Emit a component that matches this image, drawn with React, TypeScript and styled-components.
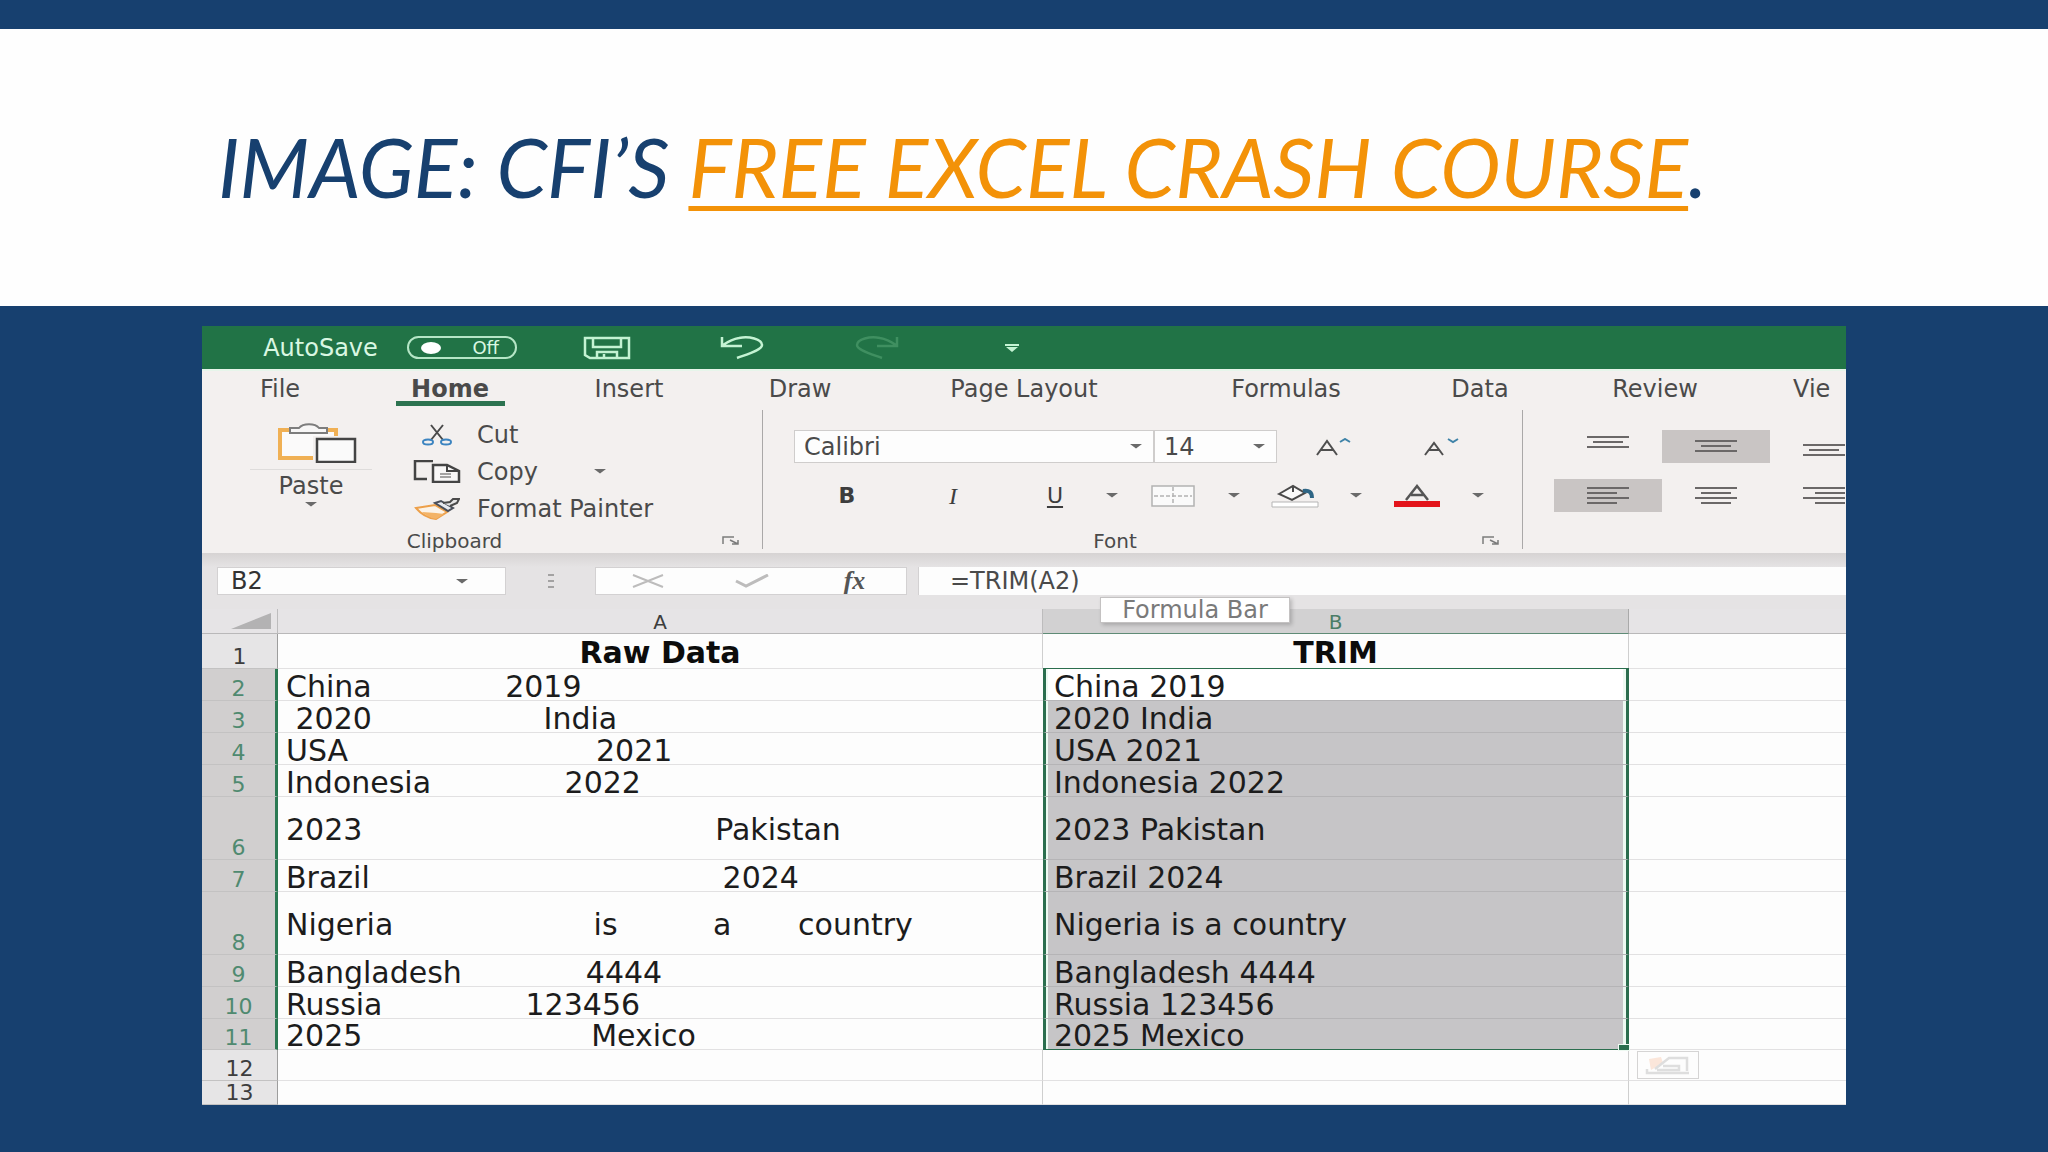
import React from "react";
import styled, { createGlobalStyle, css } from "styled-components";

const navy = "#17406f";
const orange = "#f39208";
const green = "#217346";
const ink = "#4a4a4a";

const Global = createGlobalStyle`
  *, *::before, *::after { box-sizing: border-box; }
  body { margin: 0; background: ${navy}; }
  button, input, select { font: inherit; color: inherit; margin: 0; border: 0; border-radius: 0; background: none; }
  button { padding: 0; }
  svg { display: block; flex: none; }
`;

/* ---------- slide ---------- */

const Slide = styled.main`
  min-height: 100vh;
  padding-top: 29px;
  background: ${navy};
  font-family: "DejaVu Sans", Verdana, sans-serif;
`;

const TitleBand = styled.header`
  display: flex;
  align-items: center;
  min-height: 277px;
  padding: 0 218px 2px;
  background: #fefefe;
`;

const Title = styled.h1`
  margin: 0;
  color: ${navy};
  font: italic 400 81px/100px Lato, "Open Sans", sans-serif;
  white-space: nowrap;
`;

const TitleLink = styled.a`
  color: ${orange};
  text-decoration: underline;
  text-decoration-thickness: 5px;
  text-underline-offset: 8px;
  text-decoration-skip-ink: none;
`;

const Workbook = styled.section`
  position: relative;
  margin: 20px 202px 47px;
  overflow: hidden;
  background: #f3f0ef;
  color: ${ink};
  font-size: 24px;
  line-height: 24px;
`;

/* ---------- title bar ---------- */

const QuickBar = styled.div`
  display: flex;
  align-items: center;
  height: 43px;
  padding-left: 46px;
  background: ${green};
  color: #d9f7e2;
`;

const AutoSave = styled.label`
  display: flex;
  align-items: center;
  gap: 14px;
  margin-right: 22px;
`;

const AutoSaveText = styled.span`
  width: 145px;
  text-align: center;
`;

const Toggle = styled.span`
  display: flex;
  align-items: center;
  justify-content: space-between;
  width: 110px;
  height: 23px;
  padding: 0 16px 0 12px;
  border: 2px solid #b5e6c6;
  border-radius: 12px;
  font-size: 18px;
  line-height: 18px;
`;

const ToggleBox = styled.input`
  appearance: none;
  width: 20px;
  height: 12px;
  border-radius: 50% !important;
  background: #fff !important;
`;

const QuickButton = styled.button<{ $faded?: boolean }>`
  display: flex;
  justify-content: center;
  width: 135px;
  color: ${(p) => (p.$faded ? "#3f8f60" : "#c4f3d3")};
`;

/* ---------- tabs ---------- */

const Tabs = styled.nav`
  display: grid;
  grid-template-columns: 156px 184px 174px 168px 280px 244px 144px 206px 1fr;
  height: 41px;
  border-top: 2px solid #e6f5ea;
  overflow: hidden;
`;

const Tab = styled.button<{ $active?: boolean; $cut?: boolean }>`
  display: flex;
  justify-content: ${(p) => (p.$cut ? "flex-start" : "center")};
  align-items: flex-start;
  padding: 6px 0 0 ${(p) => (p.$cut ? "35px" : "0")};
  white-space: nowrap;
  span {
    ${(p) =>
      p.$active &&
      css`
        min-width: 109px;
        border-bottom: 5px solid #2c7350;
        font-weight: 700;
      `}
  }
`;

/* ---------- ribbon ---------- */

const Ribbon = styled.div`
  display: grid;
  grid-template-columns: 561px 760px 1fr;
  height: 143px;
`;

const Group = styled.div`
  position: relative;
  display: grid;
  grid-template-rows: 1fr 24px;
  min-width: 0;
  &:not(:last-child)::after {
    content: "";
    position: absolute;
    right: 0;
    top: 0;
    bottom: 4px;
    width: 1px;
    background: #aaa8a8;
  }
`;

const GroupFoot = styled.div`
  display: grid;
  grid-template-columns: 1fr 48px;
  align-items: center;
  justify-items: center;
  padding-right: 8px;
  font-size: 20px;
`;

const ClipboardBody = styled.div`
  display: flex;
  gap: 37px;
  padding: 6px 0 0 48px;
`;

const PasteButton = styled.button`
  display: flex;
  flex-direction: column;
  align-items: center;
  width: 122px;
  padding-top: 7px;
  svg:first-child { margin-left: 12px; }
`;

const PasteLabel = styled.span`
  align-self: stretch;
  margin: 6px 0 4px;
  padding-top: 4px;
  border-top: 1px solid #dedcdb;
`;

const Commands = styled.div`
  display: grid;
  grid-auto-rows: 37px;
`;

const Command = styled.button`
  display: flex;
  align-items: center;
  gap: 12px;
  white-space: nowrap;
`;

const IconSlot = styled.span`
  display: flex;
  justify-content: center;
  width: 56px;
`;

const CommandText = styled.span`
  min-width: 104px;
  text-align: left;
`;

const FontBody = styled.div`
  display: grid;
  grid-template-rows: 33px 33px;
  gap: 16px;
  padding: 20px 0 0 31px;
`;

const ToolRow = styled.div`
  display: flex;
  align-items: stretch;
`;

const SelectBox = styled.label<{ $w: number }>`
  position: relative;
  width: ${(p) => p.$w}px;
  border: 1px solid #cfcdcc;
  background: #fdfdfd;
  svg { position: absolute; right: 10px; top: 13px; pointer-events: none; }
`;

const Select = styled.select`
  appearance: none;
  width: 100%;
  height: 100%;
  padding: 0 9px;
`;

const Tool = styled.button<{ $w: number }>`
  display: flex;
  align-items: center;
  justify-content: center;
  width: ${(p) => p.$w}px;
`;

const Letter = styled.span<{ $kind: "b" | "i" | "u" }>`
  color: #3d3d3d;
  font-size: 22px;
  font-weight: ${(p) => (p.$kind === "b" ? 700 : 400)};
  ${(p) => p.$kind === "i" && css`font-family: "Liberation Serif", serif; font-style: italic; font-size: 24px;`}
  ${(p) => p.$kind === "u" && css`text-decoration: underline; text-decoration-thickness: 2px; text-underline-offset: 3px;`}
`;

const AlignBody = styled.div`
  display: grid;
  grid-template: 33px 33px / repeat(3, 108px);
  gap: 16px 0;
  padding: 20px 0 0 31px;
`;

const AlignButton = styled.button<{ $on?: boolean; $shift?: string }>`
  display: flex;
  align-items: ${(p) => p.$shift || "center"};
  justify-content: center;
  padding: 5px 0;
  background: ${(p) => (p.$on ? "#c9c5c4" : "none")};
`;

/* ---------- formula bar ---------- */

const FormulaRow = styled.div`
  display: flex;
  height: 56px;
  padding: 14px 0 14px 15px;
  background: linear-gradient(#d6d3d3, #e5e3e4 14px);
`;

const NameBox = styled.label`
  position: relative;
  width: 289px;
  background: #fdfdfd;
  border: 1px solid #d3d1d2;
  svg { position: absolute; right: 36px; top: 11px; }
`;

const Field = styled.input`
  width: 100%;
  height: 100%;
  padding: 0 13px;
  color: #333;
`;

const Dots = styled.span`
  display: flex;
  align-items: center;
  justify-content: center;
  width: 89px;
`;

const EntryTools = styled.div`
  display: flex;
  width: 312px;
  margin-right: 11px;
  background: #fdfdfd;
  border: 1px solid #d3d1d2;
`;

const FormulaField = styled.label`
  flex: 1;
  background: #fdfdfd;
  border-left: 1px solid #d3d1d2;
  input { padding-left: 31px; color: ${ink}; }
`;

const Tip = styled.div`
  position: absolute;
  left: 898px;
  top: 271px;
  width: 190px;
  height: 26px;
  border: 1px solid #c4c2c2;
  background: #fff;
  box-shadow: 2px 2px 4px #0003;
  color: #7a7a7a;
  text-align: center;
`;

/* ---------- sheet ---------- */

const Sheet = styled.table`
  width: 100%;
  table-layout: fixed;
  border-collapse: separate;
  border-spacing: 0;
  background: #fdfdfd;
  color: #1c1c1c;
  font-size: 30px;
  line-height: 26px;
  th, td { padding: 0; }
`;

const ColHead = styled.th<{ $on?: boolean }>`
  height: 25px;
  border-right: 1px solid ${(p) => (p.$on ? "#a9a9a9" : "#bdbcbd")};
  border-bottom: 1px solid ${(p) => (p.$on ? "#5f8b76" : "#b9b8b9")};
  background: ${(p) => (p.$on ? "#d2d1d2" : "#e6e4e6")};
  color: ${(p) => (p.$on ? "#4b7d67" : "#3d3d3d")};
  font-size: 20px;
  font-weight: 400;
  line-height: 22px;
  vertical-align: bottom;
  &:last-child { border-right: 0; }
  svg { margin: 0 6px 4px auto; }
`;

const RowHead = styled.th<{ $on: boolean }>`
  border-bottom: 1px solid #c3c2c2;
  border-right: ${(p) => (p.$on ? "3px solid #2b7a53" : "1px solid #9d9d9d")};
  background: ${(p) => (p.$on ? "#d1cfcf" : "#e6e5e6")};
  color: ${(p) => (p.$on ? "#4f8a70" : "#3d3d3d")};
  font-size: 22px;
  font-weight: 400;
  line-height: 22px;
  vertical-align: bottom;
`;

const Row = styled.tr<{ $h: number }>`
  height: ${(p) => p.$h}px;
`;

const Cell = styled.td<{ $sel?: "first" | "mid" | "last"; $head?: boolean; $plain?: boolean; $text?: boolean }>`
  border-bottom: 1px solid #e2e1e2;
  white-space: pre;
  && {
    padding-left: ${(p) => (p.$head ? 0 : 8)}px;
    padding-top: ${(p) => (p.$text || p.$head ? 4 : 0)}px;
  }
  ${(p) => p.$head && css`font-weight: 700; text-align: center; color: #0c0c0c;`}
  ${(p) => p.$plain && css`border-right: 1px solid #cfcfcf;`}
  ${(p) =>
    p.$sel &&
    css`
      border-left: 3px solid #2b6e4e;
      border-right: 3px solid #2b6e4e;
      border-bottom-color: ${p.$sel === "last" ? "#2b6e4e" : "#b5b4b6"};
      background: ${p.$sel === "first" ? "#fff" : "#c6c5c7"};
      box-shadow: inset 2px 0 #eefaf2, inset -3px 0 #eefaf2${p.$sel === "first" ? ", 0 -1px #2b6e4e" : ""};
      ${p.$sel === "last" && css`position: relative;`}
    `}
`;

const FillHandle = styled.span`
  position: absolute;
  right: -4px;
  bottom: -2px;
  width: 12px;
  height: 7px;
  border: 1px solid #eefaf2;
  background: #2b6e4e;
`;

const PasteOptions = styled.button`
  display: flex;
  align-items: center;
  justify-content: center;
  width: 62px;
  height: 28px;
  border: 1px solid #d5d4d4 !important;
`;

/* ---------- drawings ---------- */

const Caret = () => (
  <svg width="14" height="5" viewBox="0 0 14 5" aria-hidden="true">
    <path d="M1 0h12L7 4.500z" fill="#6a6a6a" />
  </svg>
);

const Launcher = () => (
  <svg width="18" height="10" viewBox="0 0 18 10" fill="none" stroke="#7c7c7c" strokeWidth="1.500">
    <path d="M1 8V1h11M8 4l8 4M16 4v4h-6" />
  </svg>
);

const SaveIcon = () => (
  <svg width="48" height="24" viewBox="0 0 48 24" fill="none" stroke="currentColor" strokeWidth="2.500">
    <path d="M2 2h44v20H7l-5-3zM10 2v9h28V2M14 22v-6h20v6M21 18v4" />
  </svg>
);

const UndoIcon = ({ flip }: { flip?: boolean }) => (
  <svg width="44" height="24" viewBox="0 0 44 24" fill="none" stroke="currentColor" strokeWidth="2.500">
    <g transform={flip ? "matrix(-1 0 0 1 44 0)" : undefined}>
      <path d="M2 1v9h20M3 9C9 5 13 3 19 2C29 0 42 3 42 9C42 14 28 18 17 22" />
    </g>
  </svg>
);

const MoreIcon = () => (
  <svg width="14" height="8" viewBox="0 0 14 8">
    <path d="M0 0h14v2H0zM1 3h12L7 8z" fill="currentColor" />
  </svg>
);

const PasteIcon = () => (
  <svg width="80" height="40" viewBox="0 0 80 40">
    <path d="M3 7h56v28H3z" fill="#fbfafa" stroke="#f0b054" strokeWidth="4" />
    <path d="M36 13h44v27H36z" fill="#f3f0ef" />
    <path d="M13 10v-5h9c4-5 16-5 20 0h8v5z" fill="#f7f6f6" stroke="#7d7d7d" strokeWidth="2" />
    <path d="M40 16h38v23H40z" fill="#fafafa" stroke="#444" strokeWidth="2.500" />
  </svg>
);

const CutIcon = () => (
  <svg width="30" height="22" viewBox="0 0 30 22" fill="none" strokeWidth="2">
    <path d="M9 1l12 15M21 1L9 16" stroke="#4a4a4a" />
    <ellipse cx="6" cy="18" rx="5" ry="2.500" stroke="#3c84c0" />
    <ellipse cx="24" cy="18" rx="5" ry="2.500" stroke="#3c84c0" />
  </svg>
);

const CopyIcon = () => (
  <svg width="48" height="23" viewBox="0 0 48 23" fill="none" stroke="#444" strokeWidth="2.500">
    <path d="M14 19H2V1h18" />
    <path d="M20 5h14l12 6v11H20z" fill="#f8f7f7" />
    <path d="M34 5v6h11" strokeWidth="2" />
    <path d="M27 14h11M27 17h11" stroke="#888" strokeWidth="1.500" />
  </svg>
);

const PainterIcon = () => (
  <svg width="46" height="22" viewBox="0 0 46 22">
    <path d="M2 10l19-3 12 7-11 7c-8-1-15-5-20-11z" fill="#fbf3e8" stroke="#eda04a" strokeWidth="2" />
    <path d="M8 14l14 1 8 1-8 5c-6-1-11-4-14-7z" fill="#f3b366" />
    <path d="M21 5l6-2 12 7-5 3z" fill="#e8eaf0" stroke="#4a4f5a" strokeWidth="2" />
    <path d="M29 5l7-1 3-3h6l-2 4-7 3" fill="#e6e6e6" stroke="#4a4a4a" strokeWidth="2" />
  </svg>
);

const SizeIcon = ({ down }: { down?: boolean }) => (
  <svg width="36" height="18" viewBox="0 0 36 18" fill="none" strokeWidth="2">
    <path d={down ? "M1 17L10 5l9 12M5 12h10" : "M1 17L11 3l10 14M5 12h12"} stroke="#4f4f4f" />
    <path d={down ? "M24 1l5 3 5-3" : "M24 4l5-3 5 3"} stroke="#3f83a8" />
  </svg>
);

const BorderIcon = () => (
  <svg width="44" height="22" viewBox="0 0 44 22" fill="#fafafa" stroke="#b3b2b2" strokeWidth="1.500">
    <path d="M1 1h42v20H1z" />
    <path d="M22 2v18M3 11h38" strokeDasharray="4 2" />
  </svg>
);

const FillIcon = () => (
  <svg width="48" height="24" viewBox="0 0 48 24" fill="none" strokeWidth="2">
    <path d="M8 10L22 2l12 7-13 7zM22 2v6" stroke="#4a4a4a" fill="#fafafa" />
    <path d="M32 7c6-1 9 1 9 7" stroke="#2f6685" strokeWidth="4" />
    <path d="M1 18h46v5H1z" stroke="#b5b5b5" strokeWidth="1" fill="#fff" />
  </svg>
);

const FontColorIcon = () => (
  <svg width="46" height="24" viewBox="0 0 46 24" fill="none">
    <path d="M12 16L23 2l11 14M17 11h13" stroke="#555" strokeWidth="2.500" />
    <path d="M0 17h46v6H0z" fill="#e3141b" />
  </svg>
);

const AlignIcon = ({ rows }: { rows: [number, number][] }) => (
  <svg width="42" height={rows.length * 5} viewBox={`0 0 42 ${rows.length * 5}`}>
    {rows.map(([from, to], i) => (
      <path key={i} d={`M${from} ${i * 5 + 2}H${to}`} stroke="#6b6868" strokeWidth="2" />
    ))}
  </svg>
);

const CrossIcon = () => (
  <svg width="32" height="14" viewBox="0 0 32 14" stroke="#bdbcbc" strokeWidth="2">
    <path d="M1 1l30 12M31 1L1 13" />
  </svg>
);

const CheckIcon = () => (
  <svg width="34" height="14" viewBox="0 0 34 14" fill="none" stroke="#bdbcbc" strokeWidth="3">
    <path d="M1 7l10 5L33 1" />
  </svg>
);

const FxLetters = styled.span`
  color: #555;
  font: italic 700 26px/24px "Liberation Serif", serif;
`;

const CornerIcon = () => (
  <svg width="40" height="16" viewBox="0 0 40 16">
    <path d="M40 0v16H0z" fill="#b3b2b3" />
  </svg>
);

const OptionsIcon = () => (
  <svg width="46" height="20" viewBox="0 0 46 20" fill="none" stroke="#dedede" strokeWidth="2.500">
    <path d="M4 4l12-2 2 6-12 7z" fill="#fbe6da" stroke="none" />
    <path d="M2 14v4h42M10 14L24 3h18v13M18 11h16v4H12" />
  </svg>
);

/* ---------- data ---------- */

const tabs = ["File", "Home", "Insert", "Draw", "Page Layout", "Formulas", "Data", "Review", "Vie"];

const gap = (n: number) => " ".repeat(n);

const records: { h: number; raw: string; trim: string }[] = [
  { h: 32, raw: `China${gap(14)}2019`, trim: "China 2019" },
  { h: 32, raw: `${gap(1)}2020${gap(18)}India`, trim: "2020 India" },
  { h: 32, raw: `USA${gap(26)}2021`, trim: "USA 2021" },
  { h: 32, raw: `Indonesia${gap(14)}2022`, trim: "Indonesia 2022" },
  { h: 63, raw: `2023${gap(37)}Pakistan`, trim: "2023 Pakistan" },
  { h: 32, raw: `Brazil${gap(37)}2024`, trim: "Brazil 2024" },
  { h: 63, raw: `Nigeria${gap(21)}is${gap(10)}a${gap(7)}country`, trim: "Nigeria is a country" },
  { h: 32, raw: `Bangladesh${gap(13)}4444`, trim: "Bangladesh 4444" },
  { h: 32, raw: `Russia${gap(15)}123456`, trim: "Russia 123456" },
  { h: 31, raw: `2025${gap(24)}Mexico`, trim: "2025 Mexico" },
];

const full: [number, number] = [0, 42];
const mid: [number, number] = [6, 36];

export default function App() {
  const last = records.length - 1;
  return (
    <Slide>
      <Global />
      <TitleBand>
        <Title>
          IMAGE: CFI’S <TitleLink href="#course">FREE EXCEL CRASH COURSE</TitleLink>.
        </Title>
      </TitleBand>

      <Workbook>
        <QuickBar>
          <AutoSave>
            <AutoSaveText>AutoSave</AutoSaveText>
            <Toggle>
              <ToggleBox type="checkbox" />
              Off
            </Toggle>
          </AutoSave>
          <QuickButton aria-label="Save"><SaveIcon /></QuickButton>
          <QuickButton aria-label="Undo"><UndoIcon /></QuickButton>
          <QuickButton aria-label="Redo" $faded><UndoIcon flip /></QuickButton>
          <QuickButton aria-label="Customize toolbar"><MoreIcon /></QuickButton>
        </QuickBar>

        <Tabs>
          {tabs.map((t) => (
            <Tab key={t} $active={t === "Home"} $cut={t === "Vie"}>
              <span>{t}</span>
            </Tab>
          ))}
        </Tabs>

        <Ribbon>
          <Group>
            <ClipboardBody>
              <PasteButton>
                <PasteIcon />
                <PasteLabel>Paste</PasteLabel>
                <Caret />
              </PasteButton>
              <Commands>
                <Command>
                  <IconSlot><CutIcon /></IconSlot>
                  <CommandText>Cut</CommandText>
                </Command>
                <Command>
                  <IconSlot><CopyIcon /></IconSlot>
                  <CommandText>Copy</CommandText>
                  <Caret />
                </Command>
                <Command>
                  <IconSlot><PainterIcon /></IconSlot>
                  <CommandText>Format Painter</CommandText>
                </Command>
              </Commands>
            </ClipboardBody>
            <GroupFoot>
              <span>Clipboard</span>
              <button aria-label="Clipboard settings"><Launcher /></button>
            </GroupFoot>
          </Group>

          <Group>
            <FontBody>
              <ToolRow>
                <SelectBox $w={360}>
                  <Select aria-label="Font name" defaultValue="Calibri">
                    <option>Calibri</option>
                  </Select>
                  <Caret />
                </SelectBox>
                <SelectBox $w={123}>
                  <Select aria-label="Font size" defaultValue="14">
                    <option>14</option>
                  </Select>
                  <Caret />
                </SelectBox>
                <Tool $w={114} aria-label="Increase font size"><SizeIcon /></Tool>
                <Tool $w={102} aria-label="Decrease font size"><SizeIcon down /></Tool>
              </ToolRow>
              <ToolRow>
                <Tool $w={106}><Letter $kind="b">B</Letter></Tool>
                <Tool $w={106}><Letter $kind="i">I</Letter></Tool>
                <Tool $w={98}><Letter $kind="u">U</Letter></Tool>
                <Tool $w={16} aria-label="Underline styles"><Caret /></Tool>
                <Tool $w={106} aria-label="Borders"><BorderIcon /></Tool>
                <Tool $w={16} aria-label="Border styles"><Caret /></Tool>
                <Tool $w={106} aria-label="Fill color"><FillIcon /></Tool>
                <Tool $w={16} aria-label="Fill colors"><Caret /></Tool>
                <Tool $w={106} aria-label="Font color"><FontColorIcon /></Tool>
                <Tool $w={16} aria-label="Font colors"><Caret /></Tool>
              </ToolRow>
            </FontBody>
            <GroupFoot>
              <span>Font</span>
              <button aria-label="Font settings"><Launcher /></button>
            </GroupFoot>
          </Group>

          <Group>
            <AlignBody>
              <AlignButton aria-label="Top align" $shift="flex-start"><AlignIcon rows={[full, mid, full]} /></AlignButton>
              <AlignButton aria-label="Middle align" $on><AlignIcon rows={[full, mid, full]} /></AlignButton>
              <AlignButton aria-label="Bottom align" $shift="flex-end"><AlignIcon rows={[full, mid, full]} /></AlignButton>
              <AlignButton aria-label="Align left" $on><AlignIcon rows={[full, [0, 30], full, [0, 30]]} /></AlignButton>
              <AlignButton aria-label="Center"><AlignIcon rows={[full, mid, full, mid]} /></AlignButton>
              <AlignButton aria-label="Align right"><AlignIcon rows={[full, [12, 42], full, [12, 42]]} /></AlignButton>
            </AlignBody>
          </Group>
        </Ribbon>

        <FormulaRow>
          <NameBox>
            <Field aria-label="Name box" defaultValue="B2" />
            <Caret />
          </NameBox>
          <Dots>
            <svg width="8" height="16" viewBox="0 0 8 16" fill="#a3a2a2">
              <path d="M1 1h6v2H1zM1 7h6v2H1zM1 13h6v2H1z" />
            </svg>
          </Dots>
          <EntryTools>
            <Tool $w={104} aria-label="Cancel"><CrossIcon /></Tool>
            <Tool $w={103} aria-label="Enter"><CheckIcon /></Tool>
            <Tool $w={103}><FxLetters>fx</FxLetters></Tool>
          </EntryTools>
          <FormulaField>
            <Field aria-label="Formula bar" defaultValue="=TRIM(A2)" />
          </FormulaField>
        </FormulaRow>

        <Sheet>
          <colgroup>
            <col style={{ width: 76 }} />
            <col style={{ width: 765 }} />
            <col style={{ width: 586 }} />
            <col />
          </colgroup>
          <thead>
            <tr>
              <ColHead aria-label="Select all"><CornerIcon /></ColHead>
              <ColHead>A</ColHead>
              <ColHead $on>B</ColHead>
              <ColHead />
            </tr>
          </thead>
          <tbody>
            <Row $h={35}>
              <RowHead $on={false}>1</RowHead>
              <Cell $head $plain>Raw Data</Cell>
              <Cell $head $plain>TRIM</Cell>
              <Cell />
            </Row>
            {records.map((r, i) => (
              <Row key={i} $h={r.h}>
                <RowHead $on>{i + 2}</RowHead>
                <Cell $text>{r.raw}</Cell>
                <Cell $text $sel={i === 0 ? "first" : i === last ? "last" : "mid"}>
                  {r.trim}
                  {i === last && <FillHandle />}
                </Cell>
                <Cell />
              </Row>
            ))}
            <Row $h={31}>
              <RowHead $on={false}>12</RowHead>
              <Cell $plain />
              <Cell $plain />
              <Cell>
                <PasteOptions aria-label="Paste options"><OptionsIcon /></PasteOptions>
              </Cell>
            </Row>
            <Row $h={24}>
              <RowHead $on={false}>13</RowHead>
              <Cell $plain />
              <Cell $plain />
              <Cell />
            </Row>
          </tbody>
        </Sheet>

        <Tip role="tooltip">Formula Bar</Tip>
      </Workbook>
    </Slide>
  );
}
